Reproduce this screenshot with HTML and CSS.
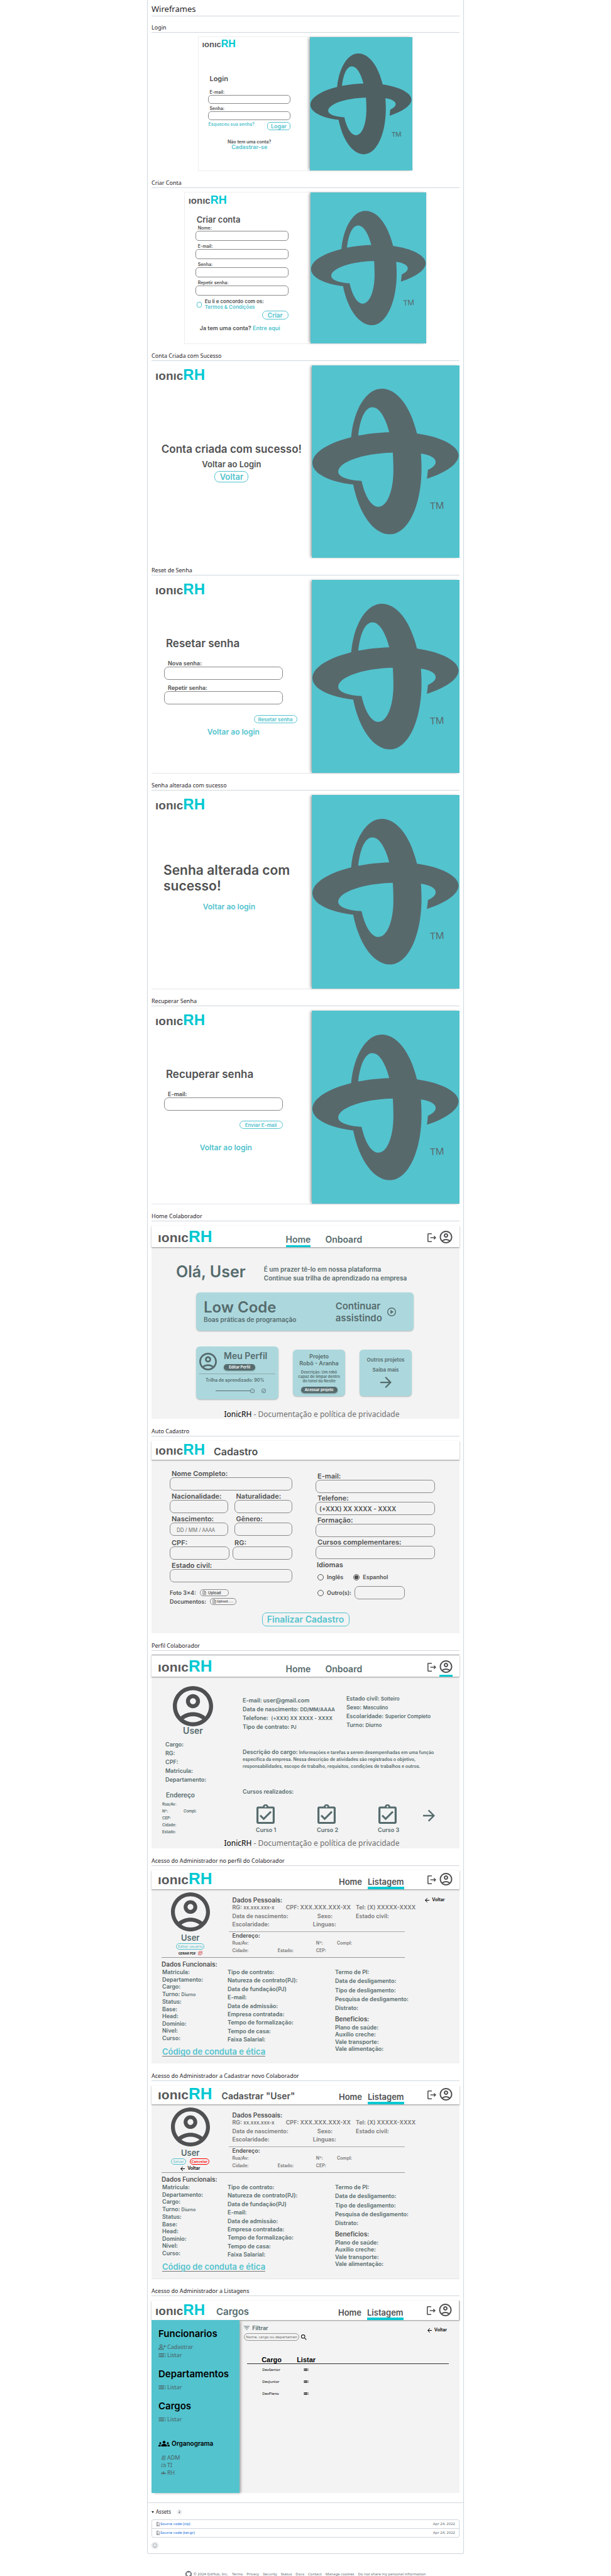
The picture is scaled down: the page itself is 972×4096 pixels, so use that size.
FILE: index.html
```html
<!DOCTYPE html>
<html lang="pt-BR">
<head>
<meta charset="utf-8">
<meta name="viewport" content="width=device-width, initial-scale=1">
<title>Wireframes ionicRH</title>
<link rel="stylesheet" href="styles.css">
</head>
<body>
<svg class="sprite" aria-hidden="true">
  <symbol id="emblem" viewBox="0 0 710 915">
    <g transform="scale(1 .66) translate(-808 -125)">
      <path fill="currentColor" fill-rule="evenodd" d="M997 643C1010 440 1070 290 1144 290C1215 290 1280 410 1313 615C1430 640 1513 705 1513 775C1513 835 1455 900 1361 945L1366 880C1390 861 1403 845 1403 822C1403 795 1375 770 1332 762C1334 800 1335 835 1335 870C1335 1140 1270 1349 1183 1349C1105 1349 1035 1200 1007 987C890 968 811 905 811 829C811 755 885 685 997 643ZM1031 631C1040 505 1065 425 1099 425C1130 425 1160 490 1180 606C1128 608 1075 618 1031 631ZM1197 755C1199 795 1200 840 1200 880C1200 1040 1168 1149 1128 1149C1095 1149 1065 1080 1047 961C980 955 935 930 935 893C935 825 1050 760 1197 755Z"/>
    </g>
  </symbol>
  <symbol id="user" viewBox="2 2 20 20"><path d="M12 2C6.48 2 2 6.48 2 12s4.48 10 10 10 10-4.48 10-10S17.52 2 12 2zM7.35 18.5C8.66 17.56 10.26 17 12 17s3.34.56 4.65 1.5C15.34 19.44 13.74 20 12 20s-3.34-.56-4.65-1.5zm10.79-1.38C16.45 15.8 14.32 15 12 15s-4.45.8-6.14 2.12C4.7 15.73 4 13.95 4 12c0-4.42 3.58-8 8-8s8 3.58 8 8c0 1.95-.7 3.73-1.86 5.12zM12 6c-1.93 0-3.5 1.57-3.5 3.5S10.07 13 12 13s3.5-1.57 3.5-3.5S13.93 6 12 6zm0 5c-.83 0-1.5-.67-1.5-1.5S11.17 8 12 8s1.5.67 1.5 1.5S12.83 11 12 11z"/></symbol>
  <symbol id="logout" viewBox="3 3 18 18"><path d="M17 8l-1.4 1.4L17.2 11H9v2h8.2l-1.6 1.6L17 16l4-4zM5 5h7V3H5c-1.1 0-2 .9-2 2v14c0 1.1.9 2 2 2h7v-2H5z"/></symbol>
  <symbol id="forward" viewBox="4 4 16 16"><path d="M12 4l-1.41 1.41L16.17 11H4v2h12.17l-5.58 5.59L12 20l8-8z"/></symbol>
  <symbol id="back" viewBox="4 4 16 16"><path d="M20 11H7.83l5.59-5.59L12 4l-8 8 8 8 1.41-1.41L7.83 13H20z"/></symbol>
  <symbol id="play" viewBox="2 2 20 20"><path d="M12 2a10 10 0 1 0 0 20 10 10 0 0 0 0-20zm0 18a8 8 0 1 1 0-16 8 8 0 0 1 0 16zM9.5 7.5v9l7-4.500z"/></symbol>
  <symbol id="pending" viewBox="2 2 20 20"><path d="M12 2a10 10 0 1 0 0 20 10 10 0 0 0 0-20zm0 18a8 8 0 1 1 0-16 8 8 0 0 1 0 16zM6 11h2.500v2.500H6zm4.700 0h2.500v2.500h-2.500zm4.700 0h2.500v2.500h-2.500z"/></symbol>
  <symbol id="done" viewBox="2 2 20 20"><path d="M12 2a10 10 0 1 0 0 20 10 10 0 0 0 0-20zm0 18a8 8 0 1 1 0-16 8 8 0 0 1 0 16zm4.600-12.400L10 14.200l-2.600-2.600L6 13l4 4 8-8z"/></symbol>
  <symbol id="clipboard" viewBox="0 0 29 31"><path fill-rule="evenodd" d="M3 3.500h7a4.600 4.600 0 0 1 9 0h7a3 3 0 0 1 3 3V28a3 3 0 0 1-3 3H3a3 3 0 0 1-3-3V6.500a3 3 0 0 1 3-3zM3.200 6.500V28h22.600V6.500zM14.500 2.300a1.300 1.300 0 1 0 0 2.700 1.300 1.300 0 0 0 0-2.700zM7 16.500l4.500 4.500L22 10.500l2 2.200-12.500 12.500L5 18.700z"/></symbol>
  <symbol id="toc" viewBox="2 5 20 14"><path d="M3 9h14V7H3v2zm0 4h14v-2H3v2zm0 4h14v-2H3v2zm16 0h2v-2h-2v2zm0-10v2h2V7h-2zm0 6h2v-2h-2v2z"/></symbol>
  <symbol id="search" viewBox="3 3 18 18"><path d="M15.5 14h-.79l-.28-.27A6.47 6.47 0 0 0 16 9.5 6.5 6.5 0 1 0 9.5 16c1.61 0 3.090-.59 4.230-1.570l.27.28v.79l5 4.990L20.490 19zm-6 0C7.010 14 5 11.990 5 9.500S7.010 5 9.500 5 14 7.010 14 9.500 11.990 14 9.500 14z"/></symbol>
  <symbol id="filter" viewBox="3 3 18 18"><path d="M10 18h4v-2h-4v2zM3 6v2h18V6H3zm3 7h12v-2H6v2z"/></symbol>
  <symbol id="groups" viewBox="0 5 24 14"><path d="M12 12.750c1.630 0 3.070.39 4.240.9 1.080.48 1.760 1.560 1.760 2.730V18H6v-1.610c0-1.180.68-2.260 1.760-2.730 1.170-.52 2.610-.91 4.240-.91zM4 13c1.100 0 2-.9 2-2s-.9-2-2-2-2 .9-2 2 .9 2 2 2zm1.130 1.100C4.760 14.040 4.390 14 4 14c-.99 0-1.930.21-2.780.58C.48 14.900 0 15.620 0 16.430V18h4.500v-1.610c0-.83.23-1.610.63-2.290zM20 13c1.100 0 2-.9 2-2s-.9-2-2-2-2 .9-2 2 .9 2 2 2zm4 3.430c0-.81-.48-1.530-1.220-1.850-.85-.37-1.790-.58-2.780-.58-.39 0-.76.04-1.130.1.4.68.63 1.460.63 2.290V18H24v-1.570zM12 6c1.660 0 3 1.340 3 3s-1.340 3-3 3-3-1.340-3-3 1.340-3 3-3z"/></symbol>
  <symbol id="person-add" viewBox="1 3 23 18"><path fill="none" stroke="currentColor" stroke-width="2" d="M9 12a3.500 3.500 0 1 0 0-7 3.500 3.500 0 0 0 0 7zM2 19v-1c0-2 4-3.500 7-3.500s7 1.500 7 3.500v1zM20 6v7M16.500 9.500h7"/></symbol>
  <symbol id="receipt" viewBox="0 0 24 24"><path fill="none" stroke="currentColor" stroke-width="2" d="M7 15V3h13v15a3 3 0 0 1-3 3H6a3 3 0 0 1-3-3v-2h11v2a3 3 0 0 0 3 3M10 7h7M10 11h7"/></symbol>
  <symbol id="devices" viewBox="0 0 24 24"><path fill="none" stroke="currentColor" stroke-width="2" d="M21 6H4v11M0 18h13M15 9h7v10h-7z"/></symbol>
  <symbol id="upload" viewBox="3 1 18 22"><path fill="none" stroke="currentColor" stroke-width="2" d="M5 3h9l5 5v13H5zM13 3v6h6M12 19v-6M9 15l3-3 3 3"/></symbol>
  <symbol id="pdf" viewBox="0 0 24 24"><path fill="none" stroke="currentColor" stroke-width="2" d="M7 2h15v15H7zM2 6v16h16M10 12V7h2v3h-2M15 7v5M19 12V7h2"/></symbol>
  <symbol id="zip" viewBox="0 0 16 16"><path fill="none" stroke="currentColor" stroke-width="1.500" d="M5 15H3V1h7l3 3v11H9M6 2v2M8 4v2M6 6v2M8 8v2M5.500 11h3v4h-3z"/></symbol>
  <symbol id="smiley" viewBox="0 0 16 16"><path fill="none" stroke="currentColor" stroke-width="1.500" d="M8 1a7 7 0 1 0 0 14A7 7 0 0 0 8 1zM5 9.500c1.500 2.500 4.500 2.500 6 0M5.500 5.500v1.500M10.500 5.500v1.500"/></symbol>
  <symbol id="github" viewBox="0 0 16 16"><path d="M8 0c4.420 0 8 3.580 8 8a8.013 8.013 0 0 1-5.450 7.590c-.4.080-.55-.17-.55-.38 0-.27.010-1.130.010-2.200 0-.75-.25-1.230-.54-1.480 1.780-.2 3.650-.88 3.650-3.950 0-.88-.31-1.590-.82-2.150.080-.2.360-1.020-.080-2.120 0 0-.67-.22-2.200.82-.64-.18-1.320-.27-2-.27-.68 0-1.360.090-2 .27-1.530-1.030-2.200-.82-2.200-.82-.44 1.100-.16 1.920-.080 2.120-.51.560-.82 1.280-.82 2.150 0 3.060 1.860 3.750 3.640 3.950-.23.2-.44.550-.51 1.070-.46.210-1.610.550-2.330-.66-.15-.24-.6-.83-1.230-.82-.67.010-.27.380.010.530.34.190.73.900.82 1.130.16.450.68 1.310 2.690.94 0 .67.010 1.300.010 1.490 0 .21-.15.450-.55.380A7.995 7.995 0 0 1 0 8c0-4.420 3.580-8 8-8z"/></symbol>
</svg>

<main class="release">
  <div class="notes">
    <h2 class="doc-title">Wireframes</h2>

    <h3 class="doc-sub doc-sub-first">Login</h3>
    <section class="screen split login">
      <div class="pane">
        <p class="brand"><span>ıonıc</span><b>RH</b></p>
        <form class="form">
          <h4 class="title">Login</h4>
          <div class="fields">
            <div class="field"><label for="lg-mail">E-mail:</label><input id="lg-mail" type="email"></div>
            <div class="field"><label for="lg-pass">Senha:</label><input id="lg-pass" type="password"></div>
          </div>
          <div class="actions"><a href="#">Esqueceu sua senha?</a><button type="button" class="btn">Logar</button></div>
          <p class="note">Não tem uma conta?<a href="#">Cadastrar-se</a></p>
        </form>
      </div>
      <div class="art"><svg viewBox="0 0 710 915"><use href="#emblem"/><text class="tm" x="569" y="688" transform="rotate(-3 569 688)">TM</text></svg></div>
    </section>

    <h3 class="doc-sub">Criar Conta</h3>
    <section class="screen split signup">
      <div class="pane">
        <p class="brand"><span>ıonıc</span><b>RH</b></p>
        <form class="form">
          <h4 class="title">Criar conta</h4>
          <div class="fields">
            <div class="field"><label for="su-name">Nome:</label><input id="su-name" type="text"></div>
            <div class="field"><label for="su-mail">E-mail:</label><input id="su-mail" type="email"></div>
            <div class="field"><label for="su-pass">Senha:</label><input id="su-pass" type="password"></div>
            <div class="field"><label for="su-pass2">Repetir senha:</label><input id="su-pass2" type="password"></div>
          </div>
          <div class="terms"><input id="su-terms" type="checkbox"><div><label for="su-terms">Eu li e concordo com os:</label><a href="#">Termos &amp; Condições</a></div></div>
          <div class="submit"><button type="button" class="btn">Criar</button></div>
          <p class="note">Ja tem uma conta? <a href="#">Entre aqui</a></p>
        </form>
      </div>
      <div class="art"><svg viewBox="0 0 710 915"><use href="#emblem"/><text class="tm" x="569" y="688" transform="rotate(-3 569 688)">TM</text></svg></div>
    </section>

    <h3 class="doc-sub">Conta Criada com Sucesso</h3>
    <section class="screen split full created">
      <div class="pane">
        <p class="brand"><span>ıonıc</span><b>RH</b></p>
        <h4 class="title">Conta criada com sucesso!</h4>
        <p class="hint">Voltar ao Login</p>
        <button type="button" class="btn">Voltar</button>
      </div>
      <div class="art"><svg viewBox="0 0 710 915"><use href="#emblem"/><text class="tm" x="569" y="688" transform="rotate(-3 569 688)">TM</text></svg></div>
    </section>

    <h3 class="doc-sub">Reset de Senha</h3>
    <section class="screen split full reset lined">
      <div class="pane">
        <p class="brand"><span>ıonıc</span><b>RH</b></p>
        <form class="form">
          <h4 class="title">Resetar senha</h4>
          <div class="fields">
            <div class="field"><label for="rs-new">Nova senha:</label><input id="rs-new" type="password"></div>
            <div class="field"><label for="rs-rep">Repetir senha:</label><input id="rs-rep" type="password"></div>
          </div>
          <div class="submit"><button type="button" class="btn">Resetar senha</button></div>
          <a class="return" href="#">Voltar ao login</a>
        </form>
      </div>
      <div class="art"><svg viewBox="0 0 710 915"><use href="#emblem"/><text class="tm" x="569" y="688" transform="rotate(-3 569 688)">TM</text></svg></div>
    </section>

    <h3 class="doc-sub">Senha alterada com sucesso</h3>
    <section class="screen split full changed lined">
      <div class="pane">
        <p class="brand"><span>ıonıc</span><b>RH</b></p>
        <h4 class="title">Senha alterada com sucesso!</h4>
        <a class="return" href="#">Voltar ao login</a>
      </div>
      <div class="art"><svg viewBox="0 0 710 915"><use href="#emblem"/><text class="tm" x="569" y="688" transform="rotate(-3 569 688)">TM</text></svg></div>
    </section>

    <h3 class="doc-sub">Recuperar Senha</h3>
    <section class="screen split full recover lined">
      <div class="pane">
        <p class="brand"><span>ıonıc</span><b>RH</b></p>
        <form class="form">
          <h4 class="title">Recuperar senha</h4>
          <div class="fields">
            <div class="field"><label for="rc-mail">E-mail:</label><input id="rc-mail" type="email"></div>
          </div>
          <div class="submit"><button type="button" class="btn">Enviar E-mail</button></div>
          <a class="return" href="#">Voltar ao login</a>
        </form>
      </div>
      <div class="art"><svg viewBox="0 0 710 915"><use href="#emblem"/><text class="tm" x="569" y="688" transform="rotate(-3 569 688)">TM</text></svg></div>
    </section>

    <h3 class="doc-sub">Home Colaborador</h3>
    <section class="screen app home">
      <header class="bar">
        <p class="brand"><span>ıonıc</span><b>RH</b></p>
        <nav class="menu"><a class="on" href="#">Home</a><a href="#">Onboard</a></nav>
        <div class="tools"><svg class="exit"><use href="#logout"/></svg><span class="me"><svg><use href="#user"/></svg></span></div>
      </header>
      <div class="hero"><h4>Olá, User</h4><p>É um prazer tê-lo em nossa plataforma<br>Continue sua trilha de aprendizado na empresa</p></div>
      <article class="card course">
        <div><h4>Low Code</h4><p>Boas práticas de programação</p></div>
        <p class="watch">Continuar<br>assistindo</p>
        <svg><use href="#play"/></svg>
      </article>
      <div class="cards">
        <article class="card profile">
          <div class="who"><svg><use href="#user"/></svg><div><h4>Meu Perfil</h4><button type="button" class="pill">Editar Perfil</button></div></div>
          <p>Trilha de aprendizado: 90%</p>
          <div class="track"><i></i><svg><use href="#pending"/></svg><svg class="end"><use href="#done"/></svg></div>
        </article>
        <article class="card project">
          <h4>Projeto<br>Robô - Aranha</h4>
          <p>Descrição: Um robô<br>capaz de limpar dentro<br>do tonel da Nestle</p>
          <button type="button" class="pill">Acessar projeto</button>
        </article>
        <article class="card others"><h4>Outros projetos</h4><p>Saiba mais</p><svg><use href="#forward"/></svg></article>
      </div>
      <footer class="legal"><b>IonicRH</b> - Documentação e política de privacidade</footer>
    </section>

    <h3 class="doc-sub">Auto Cadastro</h3>
    <section class="screen app register">
      <header class="bar"><p class="brand"><span>ıonıc</span><b>RH</b></p><h4>Cadastro</h4></header>
      <form>
        <div class="cols">
          <div class="left">
            <div class="field"><label for="rg-name">Nome Completo:</label><input id="rg-name" type="text"></div>
            <div class="pair">
              <div class="field"><label for="rg-nac">Nacionalidade:</label><input id="rg-nac" type="text"></div>
              <div class="field"><label for="rg-nat">Naturalidade:</label><input id="rg-nat" type="text"></div>
            </div>
            <div class="pair">
              <div class="field"><label for="rg-birth">Nascimento:</label><input id="rg-birth" class="date" type="text" placeholder="DD / MM / AAAA"></div>
              <div class="field"><label for="rg-gen">Gênero:</label><input id="rg-gen" type="text"></div>
            </div>
            <div class="pair docs">
              <div class="field"><label for="rg-cpf">CPF:</label><input id="rg-cpf" type="text"></div>
              <div class="field"><label for="rg-rg">RG:</label><input id="rg-rg" type="text"></div>
            </div>
            <div class="field"><label for="rg-civ">Estado civil:</label><input id="rg-civ" type="text"></div>
            <p class="file file-first">Foto 3x4: <button type="button"><svg><use href="#upload"/></svg>Upload</button></p>
            <p class="file">Documentos: <button type="button" class="small"><svg><use href="#upload"/></svg>Upload......</button></p>
          </div>
          <div class="right">
            <div class="field"><label for="rg-mail">E-mail:</label><input id="rg-mail" type="email"></div>
            <div class="field"><label for="rg-tel">Telefone:</label><input id="rg-tel" type="text" value="(+XXX) XX XXXX - XXXX"></div>
            <div class="field"><label for="rg-form">Formação:</label><input id="rg-form" type="text"></div>
            <div class="field"><label for="rg-cur">Cursos complementares:</label><input id="rg-cur" type="text"></div>
            <p class="langs">Idiomas</p>
            <div class="radios">
              <input id="rg-en" type="radio" name="lang"><label for="rg-en">Inglês</label>
              <input id="rg-es" class="second" type="radio" name="lang" checked><label for="rg-es">Espanhol</label>
            </div>
            <div class="radios other">
              <input id="rg-ot" type="radio" name="lang"><label for="rg-ot">Outro(s):</label>
              <input type="text" class="free" aria-label="Outro idioma">
            </div>
          </div>
        </div>
        <button type="button" class="btn">Finalizar Cadastro</button>
      </form>
    </section>

    <h3 class="doc-sub">Perfil Colaborador</h3>
    <section class="screen app person">
      <header class="bar">
        <p class="brand"><span>ıonıc</span><b>RH</b></p>
        <nav class="menu"><a href="#">Home</a><a href="#">Onboard</a></nav>
        <div class="tools"><svg class="exit"><use href="#logout"/></svg><span class="me on"><svg><use href="#user"/></svg></span></div>
      </header>
      <div class="sheet">
        <aside>
          <div class="face"><svg><use href="#user"/></svg><h4>User</h4></div>
          <ul class="ids"><li>Cargo:</li><li>RG:</li><li>CPF:</li><li>Matricula:</li><li>Departamento:</li></ul>
          <h5>Endereço</h5>
          <ul class="address"><li>Rua/Av:</li><li><span>Nº:</span><span>Compl:</span></li><li>CEP:</li><li>Cidade:</li><li>Estado:</li></ul>
        </aside>
        <div class="details">
          <div class="facts">
            <ul><li>E-mail: user@gmail.com</li><li>Data de nascimento: <small>DD/MM/AAAA</small></li><li>Telefone: &nbsp;<small>(+XXX) XX XXXX - XXXX</small></li><li>Tipo de contrato: <small>PJ</small></li></ul>
            <ul class="up"><li>Estado civil: <small>Solteiro</small></li><li>Sexo: <small>Masculino</small></li><li>Escolaridade: <small>Superior Completo</small></li><li>Turno: <small>Diurno</small></li></ul>
          </div>
          <p class="about">Descrição do cargo: <small>Informações e tarefas a serem desempenhadas em uma função<br>específica da empresa. Nessa descrição de atividades são registrados o objetivo,<br>responsabilidades, escopo de trabalho, requisitos, condições de trabalhos e outros.</small></p>
          <h5>Cursos realizados:</h5>
          <ul class="courses">
            <li><svg><use href="#clipboard"/></svg>Curso 1</li>
            <li><svg><use href="#clipboard"/></svg>Curso 2</li>
            <li><svg><use href="#clipboard"/></svg>Curso 3</li>
            <li class="next"><svg><use href="#forward"/></svg></li>
          </ul>
        </div>
      </div>
      <footer class="legal"><b>IonicRH</b> - Documentação e política de privacidade</footer>
    </section>

    <h3 class="doc-sub">Acesso do Administrador no perfil do Colaborador</h3>
    <section class="screen app admin">
      <header class="bar">
        <p class="brand"><span>ıonıc</span><b>RH</b></p>
        <nav class="menu"><a href="#">Home</a><a class="on" href="#">Listagem</a></nav>
        <div class="tools"><svg class="exit"><use href="#logout"/></svg><span class="me"><svg><use href="#user"/></svg></span></div>
      </header>
      <div class="top">
        <div class="face">
          <svg><use href="#user"/></svg><h4>User</h4>
          <div class="btns"><button type="button" class="mini">Editar usuário</button></div>
          <p class="pdf">GERAR PDF <svg><use href="#pdf"/></svg></p>
        </div>
        <div class="info">
          <h5>Dados Pessoais:</h5>
          <div class="line l1"><span>RG: <small>xx.xxx.xxx-x</small></span><span>CPF: XXX.XXX.XXX-XX</span><span>Tel: (X) XXXXX-XXXX</span></div>
          <div class="line l2"><span>Data de nascimento:</span><span>Sexo:</span><span>Estado civil:</span></div>
          <div class="line l3"><span>Escolaridade:</span><span>Línguas:</span></div>
          <h6>Endereço:</h6>
          <div class="line l4"><span>Rua/Av:</span><span>Nº:</span><span>Compl:</span></div>
          <div class="line l5"><span>Cidade:</span><span>Estado:</span><span>CEP:</span></div>
        </div>
        <a class="back" href="#"><svg><use href="#back"/></svg>Voltar</a>
      </div>
      <h5 class="job">Dados Funcionais:</h5>
      <div class="work">
        <ul class="c1"><li>Matricula:</li><li>Departamento:</li><li>Cargo:</li><li>Turno: <small>Diurno</small></li><li>Status:</li><li>Base:</li><li>Head:</li><li>Domínio:</li><li>Nível:</li><li>Curso:</li></ul>
        <ul class="c2"><li>Tipo de contrato:</li><li>Natureza de contrato(PJ):</li><li>Data de fundação(PJ)</li><li>E-mail:</li><li>Data de admissão:</li><li>Empresa contratada:</li><li>Tempo de formalização:</li><li>Tempo de casa:</li><li>Faixa Salarial:</li></ul>
        <div class="c3">
          <ul class="exit-data"><li>Termo de PI:</li><li>Data de desligamento:</li><li>Tipo de desligamento:</li><li>Pesquisa de desligamento:</li><li>Distrato:</li></ul>
          <h5>Beneficios:</h5>
          <ul class="perks"><li>Plano de saúde:</li><li>Auxilio creche:</li><li>Vale transporte:</li><li>Vale alimentação:</li></ul>
        </div>
        <a class="code" href="#">Código de conduta e ética</a>
      </div>
    </section>

    <h3 class="doc-sub">Acesso do Administrador a Cadastrar novo Colaborador</h3>
    <section class="screen app admin lined">
      <header class="bar">
        <p class="brand"><span>ıonıc</span><b>RH</b></p><h4>Cadastrar "User"</h4>
        <nav class="menu"><a href="#">Home</a><a class="on" href="#">Listagem</a></nav>
        <div class="tools"><svg class="exit"><use href="#logout"/></svg><span class="me"><svg><use href="#user"/></svg></span></div>
      </header>
      <div class="top">
        <div class="face">
          <svg><use href="#user"/></svg><h4>User</h4>
          <div class="btns"><button type="button" class="mini">Salvar</button><button type="button" class="mini danger">Cancelar</button></div>
          <a class="back" href="#"><svg><use href="#back"/></svg>Voltar</a>
        </div>
        <div class="info">
          <h5>Dados Pessoais:</h5>
          <div class="line l1"><span>RG: <small>xx.xxx.xxx-x</small></span><span>CPF: XXX.XXX.XXX-XX</span><span>Tel: (X) XXXXX-XXXX</span></div>
          <div class="line l2"><span>Data de nascimento:</span><span>Sexo:</span><span>Estado civil:</span></div>
          <div class="line l3"><span>Escolaridade:</span><span>Línguas:</span></div>
          <h6>Endereço:</h6>
          <div class="line l4"><span>Rua/Av:</span><span>Nº:</span><span>Compl:</span></div>
          <div class="line l5"><span>Cidade:</span><span>Estado:</span><span>CEP:</span></div>
        </div>
      </div>
      <h5 class="job">Dados Funcionais:</h5>
      <div class="work">
        <ul class="c1"><li>Matricula:</li><li>Departamento:</li><li>Cargo:</li><li>Turno: <small>Diurno</small></li><li>Status:</li><li>Base:</li><li>Head:</li><li>Domínio:</li><li>Nível:</li><li>Curso:</li></ul>
        <ul class="c2"><li>Tipo de contrato:</li><li>Natureza de contrato(PJ):</li><li>Data de fundação(PJ)</li><li>E-mail:</li><li>Data de admissão:</li><li>Empresa contratada:</li><li>Tempo de formalização:</li><li>Tempo de casa:</li><li>Faixa Salarial:</li></ul>
        <div class="c3">
          <ul class="exit-data"><li>Termo de PI:</li><li>Data de desligamento:</li><li>Tipo de desligamento:</li><li>Pesquisa de desligamento:</li><li>Distrato:</li></ul>
          <h5>Beneficios:</h5>
          <ul class="perks"><li>Plano de saúde:</li><li>Auxilio creche:</li><li>Vale transporte:</li><li>Vale alimentação:</li></ul>
        </div>
        <a class="code" href="#">Código de conduta e ética</a>
      </div>
    </section>

    <h3 class="doc-sub">Acesso do Administrador a Listagens</h3>
    <section class="screen app admin lists">
      <header class="bar">
        <p class="brand"><span>ıonıc</span><b>RH</b></p><h4>Cargos</h4>
        <nav class="menu"><a href="#">Home</a><a class="on" href="#">Listagem</a></nav>
        <div class="tools"><svg class="exit"><use href="#logout"/></svg><span class="me"><svg><use href="#user"/></svg></span></div>
      </header>
      <div class="board">
        <aside class="side">
          <h4>Funcionarios</h4>
          <a href="#"><svg><use href="#person-add"/></svg>Cadastrar</a>
          <a href="#"><svg><use href="#toc"/></svg>Listar</a>
          <h4>Departamentos</h4>
          <a href="#"><svg><use href="#toc"/></svg>Listar</a>
          <h4>Cargos</h4>
          <a href="#"><svg><use href="#toc"/></svg>Listar</a>
          <h5><svg><use href="#groups"/></svg>Organograma</h5>
          <a class="unit" href="#"><svg><use href="#receipt"/></svg>ADM</a>
          <a class="unit" href="#"><svg><use href="#devices"/></svg>TI</a>
          <a class="unit" href="#"><svg><use href="#groups"/></svg>RH</a>
        </aside>
        <div class="content">
          <div class="find">
            <div>
              <label for="ls-q"><svg><use href="#filter"/></svg>Filtrar</label>
              <div class="query"><input id="ls-q" type="text" placeholder="Nome, cargo ou departamento"><svg><use href="#search"/></svg></div>
            </div>
            <a class="back" href="#"><svg><use href="#back"/></svg>Voltar</a>
          </div>
          <table>
            <thead><tr><th>Cargo</th><th>Listar</th></tr></thead>
            <tbody>
              <tr><td>DevSenior</td><td><svg><use href="#toc"/></svg></td></tr>
              <tr><td>DevJunior</td><td><svg><use href="#toc"/></svg></td></tr>
              <tr><td>DevPleno</td><td><svg><use href="#toc"/></svg></td></tr>
            </tbody>
          </table>
        </div>
      </div>
    </section>
  </div>

  <div class="assets">
    <h3><i></i>Assets <span>2</span></h3>
    <ul>
      <li><a href="#"><svg><use href="#zip"/></svg>Source code (zip)</a><time>Apr 24, 2022</time></li>
      <li><a href="#"><svg><use href="#zip"/></svg>Source code (tar.gz)</a><time>Apr 24, 2022</time></li>
    </ul>
    <button type="button" class="react" aria-label="Reagir"><svg><use href="#smiley"/></svg></button>
  </div>
</main>

<footer class="site">
  <svg><use href="#github"/></svg><span>© 2024 GitHub, Inc.</span>
  <a href="#">Terms</a><a href="#">Privacy</a><a href="#">Security</a><a href="#">Status</a><a href="#">Docs</a><a href="#">Contact</a><a href="#">Manage cookies</a><a href="#">Do not share my personal information</a>
</footer>
</body>
</html>
```

FILE: styles.css
```css
:root {
  --teal: #53c3ce;
  --cyan: #00c8d2;
  --ink: #4f5051;
  --slate: #566b6d;
  --soft: #acd8dd;
  --line: #d0d7de;
}

* { box-sizing: border-box; margin: 0; padding: 0; }
body { background: #fff; color: #1f2328; font-family: "Noto Sans", sans-serif; }
ul { list-style: none; }
a { color: var(--teal); text-decoration: none; }
button, input { font: inherit; color: inherit; background: none; border: 0; }
button { white-space: nowrap; }
svg { display: block; flex: none; fill: currentColor; }
h4, h5, h6, small { font-size: inherit; font-weight: inherit; }
.sprite { position: absolute; width: 0; height: 0; }

/* Release notes */
.release {
  max-width: 504px;
  margin: 0 auto;
  border: 1px solid var(--line);
  border-top: 0;
  border-radius: 0 0 3px 3px;
}
.notes { padding: 7px 6px 15px; }
.doc-title {
  font-size: 13px; font-weight: 400; line-height: 15px;
  padding-bottom: 3px; border-bottom: 1px solid var(--line);
}
.doc-sub {
  font-size: 9px; font-weight: 400; line-height: 12px;
  margin: 14px 0 7px; padding-bottom: 1px; border-bottom: 1px solid var(--line);
}
.doc-sub-first { margin-top: 12px; }

/* Shared screen parts */
.screen {
  min-height: 307px;
  font-family: Inter, "Liberation Sans", sans-serif;
  font-weight: 600; font-size: 9px; line-height: 10px;
  color: var(--ink);
}
.brand {
  font-family: "Liberation Sans", sans-serif; font-weight: 700; white-space: nowrap;
  color: #58595b; font-size: 19px; line-height: 26px;
}
.brand b { color: var(--cyan); font-size: 24px; }
.btn { color: var(--teal); border: 1px solid var(--teal); border-radius: 7px; font-size: 8px; }
.field { display: grid; }
.field label { white-space: nowrap; }
.field input { width: 100%; min-width: 0; border: 1px solid #8b8b8b; border-radius: 7px; }

/* Split screens */
.split { display: grid; grid-template-columns: 52% 48%; background: #fff; margin: 0 auto; }
.art {
  display: flex; align-items: center; background: var(--teal); color: #58696c;
  box-shadow: -3px 0 4px -1px rgba(0, 0, 0, .35);
}
.art svg { width: 100%; aspect-ratio: 710 / 915; }
.tm { font: 46px "Noto Sans", sans-serif; }
.lined { box-shadow: 0 1px 0 #e4e6e8; }
.full .brand { padding: 2px 0 1px 6px; }

.login, .signup { box-shadow: 0 0 0 1px #eee; }
.login { width: 69.2%; min-height: 212px; }
.login .art { color: #4f6062; }
.login .brand { padding: 2px 0 0 5px; font-size: 13px; line-height: 18px; }
.login .brand b { font-size: 16px; }
.login .form { width: 74%; margin-left: 15px; font-size: 7px; line-height: 8px; }
.login .title { margin: 38px 0 11px 2px; font-size: 11px; line-height: 14px; }
.login .fields { display: grid; gap: 4px; }
.login label { padding-left: 2px; }
.login .field input { height: 14px; border-radius: 5px; }
.actions { display: flex; justify-content: space-between; margin-top: 3px; }
.login .actions a { white-space: nowrap; }
.login .btn { height: 13px; width: 37px; font-size: 9px; border-radius: 5px; }
.login .note { margin-top: 15px; text-align: center; }
.login .note a { display: block; font-size: 9px; }

.signup { width: 78.5%; min-height: 240px; }
.signup .brand { padding: 2px 0 0 6px; font-size: 15px; line-height: 20px; }
.signup .brand b { font-size: 18px; }
.signup .form { width: 74%; margin-left: 17px; font-size: 7px; line-height: 8px; }
.signup .title { margin: 13px 0 3px 2px; font-size: 13px; line-height: 14px; }
.signup .fields { display: grid; gap: 5px; }
.signup .field label { padding-left: 4px; }
.signup .field input { height: 16px; border-radius: 5px; }
.terms { display: flex; align-items: center; gap: 5px; margin: 5px 0 1px 2px; font-size: 8px; line-height: 9px; }
.terms input { appearance: none; width: 8px; height: 9px; border: 1px solid var(--teal); border-radius: 3px; }
.terms label, .terms a { display: block; white-space: nowrap; }
.submit { display: flex; justify-content: flex-end; }
.signup .btn { width: 42px; height: 14px; font-size: 10px; }
.signup .note { margin: 9px 0 0 7px; font-size: 9px; line-height: 10px; white-space: nowrap; }

.created { min-height: 306px; text-align: center; }
.created .brand { text-align: left; }
.created .title { margin-top: 92px; font-size: 17px; line-height: 20px; white-space: nowrap; }
.hint { margin: 7px 0 4px; font-size: 13px; line-height: 14px; }
.created .btn { width: 54px; height: 18px; font-size: 13px; border-radius: 8px; }

.reset .form, .recover .form { width: 74%; margin-left: 20px; }
.reset .title, .recover .title { margin: 60px 0 17px 3px; font-size: 17px; line-height: 20px; white-space: nowrap; }
.reset .fields { display: grid; gap: 8px; }
.reset .field label, .recover .field label { padding-left: 6px; font-size: 9px; line-height: 10px; }
.reset .field input, .recover .field input { height: 21px; }
.reset .btn, .recover .btn { width: 69px; height: 13px; }
.reset .submit { margin: 17px -23px 0 0; }
.recover .submit { margin-top: 16px; }
.return { display: block; text-align: center; font-size: 12px; line-height: 12px; }
.reset .return { margin: 8px -32px 0 0; }
.recover .return { margin: 24px -8px 0 0; }
.changed { min-height: 308px; }
.changed .title { margin: 76px 28px 15px 19px; font-size: 21px; line-height: 25px; }
.changed .return { padding-right: 8px; }

/* App screens */
.app { background: #f3f3f3; color: var(--slate); }
.bar {
  display: flex; align-items: flex-end; height: 34px; padding: 0 11px 0 10px;
  background: #fff; box-shadow: 0 1px 2px rgba(0, 0, 0, .4);
}
.bar .brand { font-size: 21px; line-height: 30px; }
.bar .brand b { font-size: 26px; }
.home .brand, .person .brand { flex: 0 0 43.4%; }
.menu { display: flex; flex: 1; gap: 23px; }
.menu a { color: inherit; font-size: 14px; line-height: 16px; padding-bottom: 1px; border-bottom: 3px solid transparent; }
.menu a.on { border-color: var(--cyan); }
.tools { display: flex; gap: 5px; color: var(--ink); }
.exit { width: 14px; height: 14px; margin-top: 4px; }
.me { height: 26px; border-bottom: 3px solid transparent; }
.me svg { width: 21px; height: 20px; }
.me.on { border-color: var(--cyan); }
.legal {
  font-family: "Noto Sans", sans-serif; font-weight: 400; font-size: 12px; line-height: 14px;
  color: #707070; text-align: center; padding-left: 20px;
}
.legal b { color: #000; font-weight: 400; }

/* Home */
.hero { display: grid; grid-template-columns: 31% 1fr; padding: 25px 0 16px 39px; }
.hero h4 { font-size: 25px; line-height: 28px; white-space: nowrap; }
.hero p { padding-top: 3px; font-size: 10px; line-height: 14px; white-space: nowrap; }
.card { background: var(--soft); border-radius: 6px; box-shadow: 0 1px 2px rgba(0, 0, 0, .25); }
.course {
  display: grid; grid-template-columns: 210fr 82fr 42fr; align-items: center;
  margin: 0 15% 25px 14.5%; padding: 0 0 0 12px; height: 61px;
}
.course h4 { font-size: 24px; line-height: 24px; }
.course p { font-size: 10px; line-height: 14px; white-space: nowrap; }
.course .watch { font-size: 15px; line-height: 19px; }
.course svg { width: 14px; height: 14px; }
.cards {
  display: grid; grid-template-columns: 131fr 83fr 83fr; gap: 23px; align-items: center;
  margin: 0 15.5% 17px 14.5%;
}
.cards p, .cards h4 { white-space: nowrap; }
.pill { height: 10px; border-radius: 5px; background: var(--slate); color: #fff; font-size: 6px; line-height: 10px; box-shadow: 0 1px 2px rgba(0, 0, 0, .35); }
.profile { height: 84px; padding: 7px 5px 0; }
.who { display: flex; gap: 11px; padding-bottom: 5px; border-bottom: 1px solid #8fa9ab; }
.who svg { width: 28px; height: 28px; margin-top: 3px; }
.who h4 { font-size: 14px; line-height: 16px; margin-bottom: 5px; }
.who div { line-height: 0; }
.who .pill { width: 50px; }
.profile p { margin: 6px 5px 9px 10px; font-size: 7px; line-height: 8px; }
.track { display: flex; align-items: center; padding-left: 26px; }
.track i { width: 55px; height: 1px; background: var(--slate); }
.track svg { width: 7px; height: 7px; }
.track .end { margin-left: 11px; }
.project, .others { height: 74px; text-align: center; }
.project { padding-top: 5px; }
.project h4 { line-height: 11px; }
.project p { margin: 5px 0 6px; font-size: 6px; line-height: 7px; }
.project .pill { width: 58px; display: block; margin: 0 auto; }
.others { padding-top: 11px; font-size: 8px; }
.others p { margin: 6px 0; }
.others svg { width: 18px; height: 18px; margin: 0 auto; }

/* Register */
.register { min-height: 306px; color: var(--ink); }
.register .bar { height: 30px; padding-left: 6px; }
.register .brand, .lists .brand { font-size: 19px; line-height: 28px; }
.register .brand b, .lists .brand b { font-size: 24px; }
.bar h4 { font-size: 16px; line-height: 26px; padding-left: 14px; white-space: nowrap; }
.cols { display: grid; grid-template-columns: 195fr 190fr; gap: 37px; padding: 0 39px 0 29px; }
.left { display: grid; gap: 3px; padding-top: 16px; align-content: start; }
.right { display: grid; gap: 2px; padding-top: 20px; align-content: start; }
.register .field label { padding-left: 3px; font-size: 11px; line-height: 12px; }
.register .field input { height: 21px; padding: 0 5px; font-size: 10px; }
.register .field .date { padding-left: 10px; }
.pair { display: grid; grid-template-columns: 1fr 1fr; gap: 10px; }
.docs { gap: 5px; margin-top: 2px; }
.date::placeholder { font-family: "Noto Sans", sans-serif; font-weight: 400; font-size: 8px; color: #707070; opacity: 1; }
.file { display: flex; align-items: center; gap: 6px; line-height: 11px; }
.file-first { margin-top: 8px; }
.file button { display: flex; align-items: center; gap: 3px; width: 46px; height: 11px; padding-left: 3px; border: 1px solid #8b8b8b; border-radius: 5px; font-size: 6px; }
.file .small { width: 42px; gap: 1px; font-size: 5px; }
.file svg { width: 6px; height: 7px; }
.langs { font-size: 11px; line-height: 12px; padding-left: 2px; margin-top: 1px; }
.radios { display: flex; align-items: center; gap: 5px; padding-left: 3px; margin-top: 7px; }
.radios [type="radio"] { appearance: none; width: 10px; height: 10px; border: 1px solid var(--ink); border-radius: 50%; }
.radios [type="radio"]:checked { background: radial-gradient(circle, var(--ink) 0 3px, transparent 3px); }
.radios .second { margin-left: 11px; }
.free { width: 80px; height: 21px; border: 1px solid #8b8b8b; border-radius: 7px; }
.register form > .btn { display: block; width: 139px; height: 22px; margin: 12px auto 0; font-size: 14px; }

/* Profile */
.person { box-shadow: 0 -1px 0 #999; }
.sheet { display: grid; grid-template-columns: 29.6% 1fr; }
.sheet .face { width: 64px; margin: 15px 0 8px 34px; text-align: center; }
.sheet .face svg { width: 64px; height: 64px; color: var(--ink); }
.face h4 { font-size: 14px; line-height: 14px; }
.ids { padding-left: 22px; line-height: 14px; }
.sheet h5 { font-size: 10px; }
.sheet aside h5 { margin: 11px 0 3px 23px; line-height: 12px; }
.address { padding-left: 17px; font-size: 6px; line-height: 11px; }
.address span:first-child { display: inline-block; width: 34px; }
.facts { display: grid; grid-template-columns: 47.8% 1fr; padding-top: 31px; line-height: 14px; white-space: nowrap; }
.facts .up { margin-top: -3px; }
.facts small { font-size: 8px; }
.about { margin: 28px 0 30px; white-space: nowrap; }
.about small { font-size: 7px; }
.details h5 { font-size: 9px; line-height: 10px; }
.courses { display: grid; grid-template-columns: 97fr 97fr 71fr 59fr; padding: 15px 0 0 21px; }
.courses svg { width: 29px; height: 31px; margin: 0 0 5px 1px; }
.courses .next svg { width: 19px; height: 20px; margin-top: 8px; }
.person .legal { padding-top: 6px; }

/* Admin */
.admin .bar { height: 30px; }
.admin .menu { flex: 0 0 131px; margin-left: auto; gap: 9px; color: var(--ink); }
.admin .menu a { font-size: 13px; padding-bottom: 0; border-bottom-width: 4px; }
.admin .tools { margin-left: 10px; }
.admin .bar h4 { font-size: 14px; color: var(--ink); padding-left: 15px; }
.top { display: grid; grid-template-columns: 25.2% 57.1% 1fr; }
.top .face { padding-top: 5px; display: grid; justify-items: center; align-content: start; }
.top .face > svg { width: 64px; height: 62px; color: var(--ink); }
.top .face h4 { font-size: 13px; margin: 3px 0 2px; }
.btns { display: flex; gap: 6px; }
.mini { height: 10px; padding: 0 2px; border: 1px solid var(--teal); border-radius: 5px; color: var(--teal); font: 400 6px/8px "Noto Sans", sans-serif; }
.mini.danger { color: #f00; border-color: #f00; font-weight: 600; }
.pdf { display: flex; gap: 3px; margin-top: 2px; color: #000; font-size: 5px; line-height: 8px; }
.pdf svg { width: 7px; height: 7px; color: #c33; }
.back { display: flex; align-items: center; gap: 4px; color: #000; font-size: 7px; line-height: 8px; }
.back svg { width: 7px; height: 7px; }
.face .back { margin-top: 2px; }
.top > .back { align-self: start; margin: 13px 0 0 32px; }
.info { padding: 12px 0 6px; color: #777; white-space: nowrap; }
.info h5, .job, .c3 h5 { color: var(--ink); font-size: 10px; }
.info h5 { padding-left: 5px; }
.line { display: grid; padding-left: 5px; }
.line small { font-size: 8px; }
.l1 { grid-template-columns: 85fr 111fr 78fr; margin-top: 2px; }
.l2 { grid-template-columns: 135fr 61fr 78fr; margin-top: 4px; }
.l3 { grid-template-columns: 128fr 146fr; margin-top: 3px; }
.l4, .l5 { font-size: 7px; line-height: 8px; }
.l4 { grid-template-columns: 133fr 33fr 108fr; margin-top: 3px; }
.l5 { grid-template-columns: 72fr 61fr 141fr; margin-top: 4px; }
.line span { min-width: 0; }
.info h6 { margin-top: 6px; padding: 1px 5px 0; border-top: 1px solid #aaa; color: var(--ink); font-weight: 600; }
.job { margin: 0 17.7% 0 16px; padding-top: 4px; border-top: 1px solid #999; line-height: 12px; }
.work { display: grid; grid-template-columns: 104fr 171fr 198fr; padding: 2px 0 0 17px; white-space: nowrap; }
.work ul { display: flex; flex-direction: column; justify-content: space-between; }
.work small { font-size: 7px; }
.c1 { height: 115px; }
.c2 { height: 117px; }
.c3 { grid-row: 1 / 3; grid-column: 3; }
.exit-data { height: 67px; }
.c3 h5 { margin: 6px 0 3px; line-height: 12px; }
.perks { height: 44px; }
.code { grid-column: 1 / 3; justify-self: start; margin-top: 7px; font-size: 13px; line-height: 14px; border-bottom: 1px solid #777; }

/* Listings */
.lists { min-height: 306px; display: grid; grid-template-rows: auto 1fr; }
.lists .bar { height: 31px; padding-left: 6px; border-right: 1px solid #aaa; }
.lists .bar h4 { font-size: 15px; color: var(--slate); padding-left: 18px; }
.board { display: grid; grid-template-columns: 28.6% 1fr; }
.side { padding: 13px 0 0 11px; background: var(--teal); box-shadow: 3px 1px 4px -1px rgba(0, 0, 0, .35); }
.side h4 { color: #000; font-size: 15px; line-height: 18px; margin-bottom: 5px; }
.side a { display: flex; align-items: center; gap: 2px; color: #4c6063; font: 400 9px/13px "Noto Sans", sans-serif; }
.side a + h4 { margin-top: 15px; }
.side a svg { width: 12px; height: 10px; }
.side h5 { display: flex; align-items: center; gap: 3px; margin: 25px 0 10px; color: #000; font-size: 10px; line-height: 14px; }
.side h5 svg { width: 18px; height: 11px; }
.side .unit { line-height: 12px; padding-left: 4px; }
.side .unit svg { width: 8px; height: 8px; }
.content { padding: 8px 17px 0 7px; }
.find { display: flex; justify-content: space-between; align-items: flex-start; }
.find label { display: flex; gap: 4px; }
.find label svg { width: 9px; height: 9px; }
.query { display: flex; align-items: center; gap: 3px; margin-top: 3px; color: #000; }
.query input { width: 88px; height: 12px; padding: 0 2px; border: 1px solid #999; border-radius: 6px; font: 400 6px/10px "Noto Sans", sans-serif; }
.query input::placeholder { color: #666; opacity: 1; }
.query svg { width: 9px; height: 9px; }
.find .back { margin: 4px 3px 0 0; }
.content table { width: calc(100% - 5px); margin: 24px 0 0 5px; border-collapse: collapse; color: #000; }
.content th { border-bottom: 1px solid #333; font: 700 11px/12px "Liberation Sans", sans-serif; text-align: left; }
.content td { height: 19px; font: 400 6px/8px "Noto Sans", sans-serif; }
.content th:first-child { width: 79px; padding-left: 23px; }
.content td:first-child { padding-left: 24px; }
.content td svg { width: 8px; height: 6px; margin-left: 11px; }

/* Assets */
.assets { padding: 8px 6px 7px; border-top: 1px solid var(--line); }
.assets h3 { display: flex; align-items: center; gap: 3px; font-size: 8px; font-weight: 400; line-height: 12px; }
.assets h3 i { border: 2px solid transparent; border-top: 3px solid #1f2328; border-bottom: 0; }
.assets h3 span { width: 9px; height: 9px; margin-left: 6px; border-radius: 5px; background: #eff1f3; font-size: 5px; line-height: 9px; text-align: center; }
.assets ul { margin: 6px 0 7px; border: 1px solid var(--line); border-radius: 3px; }
.assets li { display: flex; justify-content: space-between; padding: 0 6px; font-size: 6px; line-height: 13px; color: #656d76; }
.assets li + li { border-top: 1px solid var(--line); }
.assets a { display: flex; align-items: center; color: #0969da; }
.assets a svg { width: 7px; height: 7px; color: #656d76; }
.react { display: grid; place-items: center; width: 11px; height: 11px; border: 1px solid var(--line); border-radius: 50%; color: #656d76; }
.react svg { width: 7px; height: 7px; }

.site { display: flex; justify-content: center; align-items: center; gap: 6px; height: 10px; margin-top: 27px; color: #656d76; font-size: 6px; line-height: 10px; white-space: nowrap; }
.site a { color: inherit; }
.site svg { width: 10px; height: 10px; margin-right: -3px; }
```
